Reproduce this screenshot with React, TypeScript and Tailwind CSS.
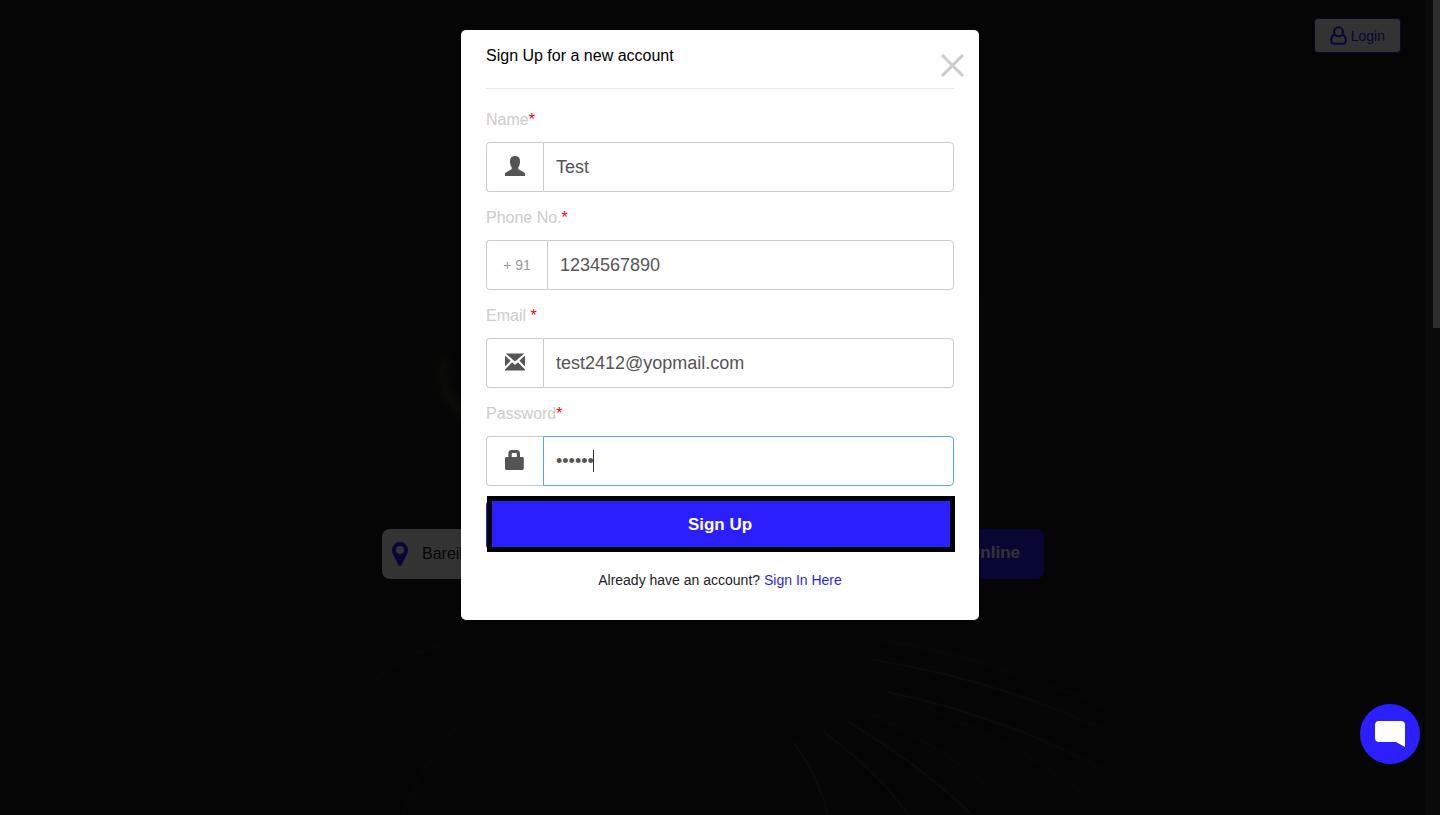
import { useId, type ReactNode } from "react";

function PersonIcon() {
  return (
    <svg viewBox="0 0 20 20" className="h-5 w-5" fill="currentColor" aria-hidden="true">
      <path d="M10 0C7 0 5 1.800 5 4.800c0 2.800.4 5.200 1.700 6.600v1c0 .5-.3.900-.8 1.200L.9 16.500c-.6.300-.9.700-.9 1.300V20h20v-2.200c0-.6-.3-1-.9-1.300l-5-2.900c-.5-.3-.8-.7-.8-1.200v-1C14.600 10 15 7.600 15 4.800 15 1.800 13 0 10 0z" />
    </svg>
  );
}

function EnvelopeIcon() {
  return (
    <svg viewBox="0 0 20 20" className="h-5 w-5" fill="currentColor" aria-hidden="true">
      <path d="M.6 1.500h18.800L10 9.600z" />
      <path d="M0 3.600l5.600 5.200L0 14.400z" />
      <path d="M20 3.600l-5.600 5.200 5.600 5.600z" />
      <path d="M7.100 10.300L10 13l2.900-2.700 6.400 6.400c.4.400.7.600.7 1v.8H0v-.8c0-.4.3-.6.700-1z" />
    </svg>
  );
}

function LockIcon() {
  return (
    <svg viewBox="0 0 20 20" className="h-5 w-5" fill="currentColor" aria-hidden="true">
      <path
        fillRule="evenodd"
        d="M6.500 0h5.100C13.600 0 15 1.400 15 3.400V7h2.400c.8 0 1.400.6 1.400 1.400v10.200c0 .8-.6 1.400-1.400 1.400H1.400C.6 20 0 19.400 0 18.600V8.400C0 7.600.6 7 1.400 7h2V3.400C3.400 1.400 4.600 0 6.500 0zM7.600 2.900c-.5 0-.9.4-.9.9V7h5.100V3.800c0-.5-.4-.9-.9-.9z"
      />
    </svg>
  );
}

function CatBackdrop() {
  return (
    <svg
      className="absolute inset-0 h-full w-full"
      viewBox="0 0 1440 815"
      preserveAspectRatio="xMidYMid slice"
      fill="none"
      aria-hidden="true"
    >
      <defs>
        <radialGradient id="fur">
          <stop offset="0" stopColor="#202020" />
          <stop offset="1" stopColor="#191919" />
        </radialGradient>
        <linearGradient id="whisker" gradientUnits="userSpaceOnUse" x1="790" y1="0" x2="1120" y2="0">
          <stop offset="0" stopColor="#343434" />
          <stop offset=".5" stopColor="#383838" />
          <stop offset="1" stopColor="#242424" />
        </linearGradient>
        <filter id="soft" x="-100%" y="-50%" width="300%" height="200%">
          <feGaussianBlur stdDeviation="4" />
        </filter>
      </defs>
      <ellipse cx="940" cy="420" rx="170" ry="400" fill="url(#fur)" />
      <ellipse cx="730" cy="690" rx="160" ry="120" fill="url(#fur)" />
      <path d="M446 358c-8 20-2 42 22 60" stroke="#4c4c30" strokeWidth="7" filter="url(#soft)" />
      <g stroke="url(#whisker)" strokeWidth="2" strokeLinecap="round">
        <path d="M874 660Q990 678 1106 730" />
        <path d="M888 692Q1010 718 1114 775" />
        <path d="M850 723Q920 765 971 814" />
        <path d="M825 733Q875 770 908 814" />
        <path d="M794 743Q818 776 828 814" />
      </g>
      <g stroke="#272727" strokeWidth="2" strokeLinecap="round">
        <path d="M883 640Q990 658 1106 707" />
        <path d="M898 697Q1020 742 1087 797" />
        <path d="M869 713Q960 755 1019 814" />
        <path d="M462 637Q408 652 370 684" />
        <path d="M455 730Q416 770 404 814" />
      </g>
    </svg>
  );
}

type FieldProps = {
  label: string;
  type: string;
  value: string;
  addon: ReactNode;
  wideAddon?: boolean;
  focused?: boolean;
};

function Field({ label, type, value, addon, wideAddon, focused }: FieldProps) {
  const id = useId();
  return (
    <div>
      <label htmlFor={id} className="mb-[11px] block text-base leading-[22px] text-[#ccc]">
        {label}
        <span className="text-[#f00]">*</span>
      </label>
      <div className="flex h-[50px]">
        <span
          className={`flex shrink-0 items-center justify-center rounded-l border border-r-0 border-[#ccc] text-sm ${
            wideAddon ? "w-[61px] text-[#999]" : "w-[57px] pb-0.5 text-[#555]"
          }`}
        >
          {addon}
        </span>
        <div className="relative min-w-0 flex-1">
          <input
            id={id}
            type={type}
            defaultValue={value}
            autoComplete="off"
            className={`h-full w-full rounded-r border bg-white px-3 text-lg text-[#555] outline-none ${
              focused ? "border-[#53a9ea]" : "border-[#ccc]"
            }`}
          />
          {focused && <span className="absolute top-3.5 left-[50px] h-[22px] w-px bg-[#333]" />}
        </div>
      </div>
    </div>
  );
}

export default function App() {
  return (
    <div className="relative flex min-h-screen bg-[#191919] font-['Liberation_Sans',Arial,sans-serif]">
      <CatBackdrop />

      <main className="relative flex-1">
        <header className="flex justify-end px-[25px] pt-[18px]">
          <button className="flex h-[35px] items-center gap-1 rounded border border-[#2b1fff] bg-white px-[15px] text-sm text-[#2b1fff]">
            <svg viewBox="0 0 17 19" className="h-[19px] w-[17px]" fill="none" stroke="currentColor" strokeWidth="2" aria-hidden="true">
              <circle cx="8.500" cy="5.800" r="4.500" />
              <path d="M4.600 8.800C2.200 9.500 1.200 11.700 1.200 14.600c0 2 1 3.200 2.900 3.200h8.800c1.900 0 2.900-1.200 2.900-3.200 0-2.900-1-5.100-3.400-5.800" />
            </svg>
            Login
          </button>
        </header>
        <div className="mx-auto mt-[476px] flex h-[50px] w-full max-w-[662px]">
          <label className="flex flex-1 items-center gap-3.5 rounded-l-lg bg-white pl-2.5 text-[#222]">
            <svg viewBox="0 0 16 24" className="h-6 w-4 shrink-0 text-[#2b1fff]" fill="currentColor" role="img" aria-label="City">
              <path
                fillRule="evenodd"
                d="M8 0a8 8 0 0 1 8 8c0 2-.6 3.300-1.400 5L9.500 23.200c-.6 1.100-2.400 1.100-3 0L1.400 13C.6 11.300 0 10 0 8a8 8 0 0 1 8-8zm0 4a4 4 0 1 0 0 8 4 4 0 0 0 0-8z"
              />
            </svg>
            <input type="text" defaultValue="Bareilly" className="min-w-0 flex-1 text-base outline-none" />
          </label>
          <button className="rounded-r-lg bg-[#2b1fff] px-6 pb-0.5 text-[17px] font-bold text-white">
            Order Online
          </button>
        </div>
      </main>

      <div className="relative flex w-3.5 justify-end bg-[#323232]" aria-hidden="true">
        <div className="h-[328px] w-[7px] bg-[#e1e1e1]" />
      </div>

      <div className="absolute inset-0 flex items-start justify-center bg-black/80 pt-[30px]">
        <section
          role="dialog"
          aria-labelledby="signup-title"
          className="relative w-full max-w-[518px] rounded-[5px] bg-white px-[25px] pt-[15px] pb-[30px]"
        >
          <h1
            id="signup-title"
            className="mb-5 border-b border-[#eaeaea] pb-[21px] text-base leading-[22px] text-black"
          >
            Sign Up for a new account
          </h1>
          <button aria-label="Close" className="absolute top-6 right-3.5 text-[#ccc]">
            <svg viewBox="0 0 24 24" className="h-6 w-6" fill="none" stroke="currentColor" strokeWidth="3" aria-hidden="true">
              <path d="M1 1l21 21M22 1l-21 21" />
            </svg>
          </button>

          <form onSubmit={(e) => e.preventDefault()}>
            <div className="flex flex-col gap-[15px]">
              <Field label="Name" type="text" value="Test" addon={<PersonIcon />} />
              <Field label="Phone No." type="tel" value="1234567890" addon="+ 91" wideAddon />
              <Field label="Email " type="email" value="test2412@yopmail.com" addon={<EnvelopeIcon />} />
              <Field label="Password" type="password" value="secret" addon={<LockIcon />} focused />
            </div>
            <button
              type="submit"
              className="relative mt-3.5 h-[50px] w-full rounded-[5px] bg-[#2b1fff] text-[17px] font-bold text-white"
            >
              Sign Up
              <span className="absolute -top-1 -right-px -bottom-0.5 left-px border-[5px] border-black" />
            </button>
          </form>

          <p className="mt-5 text-center text-sm text-[#222]">
            Already have an account?{" "}
            <a href="#signin" className="text-[#2b1fff]">
              Sign In Here
            </a>
          </p>
        </section>
      </div>

      <button
        aria-label="Open chat"
        className="fixed right-5 bottom-[51px] flex h-[60px] w-[60px] items-center justify-center rounded-full bg-[#2b1fff] text-white"
      >
        <svg viewBox="0 0 30 26" className="h-[26px] w-[30px]" fill="currentColor" aria-hidden="true">
          <path d="M4 0h22a4 4 0 0 1 4 4v22l-9-5H4a4 4 0 0 1-4-4V4a4 4 0 0 1 4-4z" />
        </svg>
      </button>
    </div>
  );
}
